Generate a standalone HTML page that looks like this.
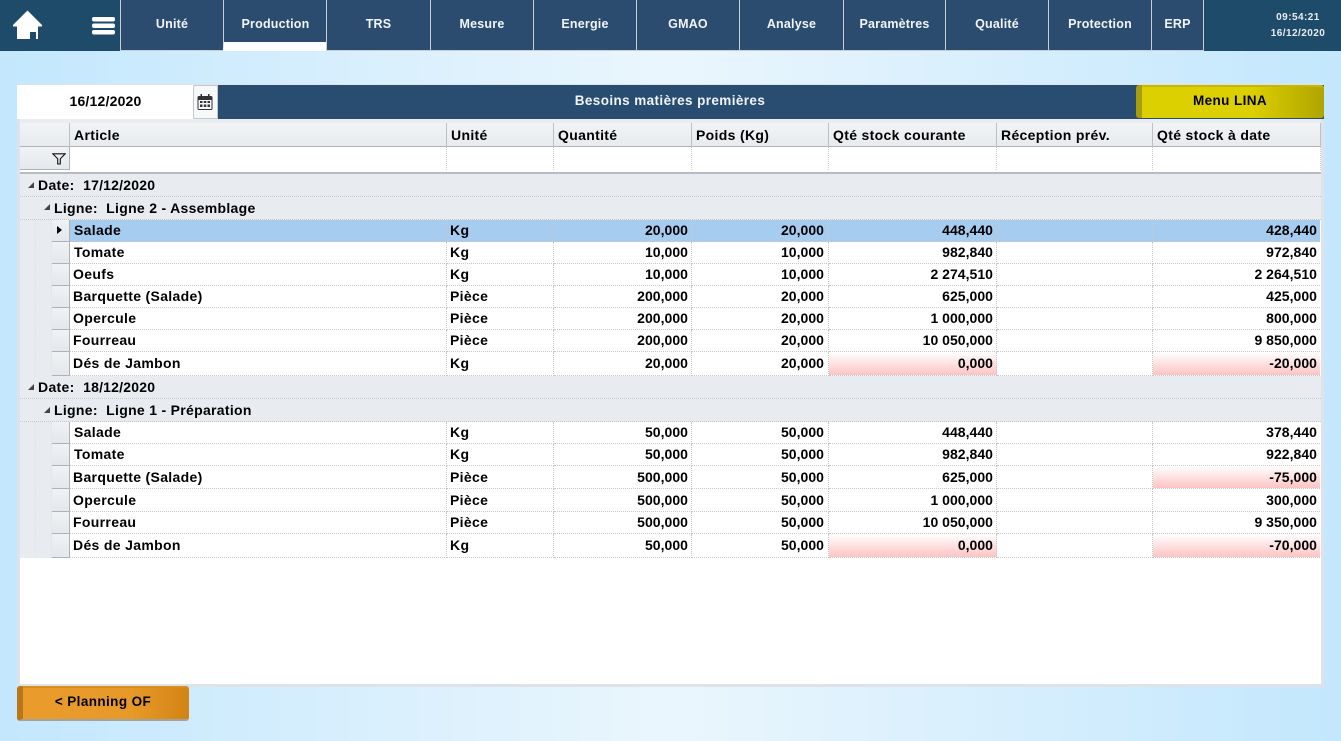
<!DOCTYPE html>
<html><head><meta charset="utf-8">
<style>
html,body{margin:0;padding:0}
body{width:1341px;height:741px;overflow:hidden;position:relative;font-family:"Liberation Sans",sans-serif;font-weight:bold;font-size:14px;letter-spacing:.33px;color:#000;background:linear-gradient(90deg,#c3e7fd 0%,#eaf6fd 50%,#c3e7fd 100%)}
div,span{position:absolute;box-sizing:border-box;white-space:nowrap}
#nav{left:0;top:0;width:1341px;height:51px;background:#1f4b6b}
.t{top:0;height:51px;background:#2b4c6f;color:#f0f4f8;font-size:12.5px;letter-spacing:.2px;text-align:center;line-height:48px;border-left:1px solid #c9ced4;border-bottom:1px solid #c9ced4}
.r{left:20px;width:1301px;height:22px;background:#fff}
.c{top:0;height:100%;border-bottom:1px dotted #c8c8c8;border-right:1px dotted #c8c8c8;display:block}
.i{left:32px;width:17px;top:0;height:100%;background:linear-gradient(#f0f2f4,#e4e7eb);border-bottom:1px solid #aeb2b8}
.b1{left:0;width:16px;top:0;height:100%;background:#e8ebef;border-right:1px dotted #e0e2e6}
.b2{left:16px;width:16px;top:0;height:100%;background:#e8ebef;border-right:1px dotted #e0e2e6}
.a{left:49px;width:378px;padding-left:4px;border-left:1px solid #aeb2b8}
.u{left:427px;width:107px;padding-left:3px}
.q{left:534px;width:138px;text-align:right;padding-right:3px;letter-spacing:.03px}
.p{left:672px;width:137px;text-align:right;padding-right:4px;letter-spacing:.03px}
.s{left:809px;width:168px;text-align:right;padding-right:3px;letter-spacing:.03px}
.e{left:977px;width:156px}
.d{left:1133px;width:167px;text-align:right;padding-right:3px;border-right:0;letter-spacing:.03px}
.n{background:linear-gradient(#fff,#fdc3c3)}
.sel .c{background:#a6ccf0}
.g{left:20px;width:1301px;background:#e8ebef;border-bottom:1px dotted #c8c8c8}
.h{top:123px;height:24px;line-height:24px;padding-left:4px;border-left:1px solid #bcc0c6}
.f{top:147px;height:23px;border-left:1px dotted #ccc}
.tri{width:0;height:0;border-left:6px solid transparent;border-bottom:6px solid #444}
.big{font-size:13.5px;letter-spacing:.4px}
.dt{position:static;letter-spacing:.2px}
</style></head><body>

<div id="nav"></div>
<svg style="position:absolute;left:12px;top:10px" width="32" height="30" viewBox="0 0 32 30"><path fill="#fff" d="M15.500 0.500 L30 15 L30 16.500 L26 16.500 L26 29 L24 29 L24 22 L18 22 L18 29 L5 29 L5 16.500 L1 16.500 L1 15 Z"/></svg>
<svg style="position:absolute;left:91px;top:16px" width="25" height="19" viewBox="0 0 25 19"><rect x="1" y="1" width="23" height="4.500" rx="2" fill="#fff"/><rect x="1" y="7.500" width="23" height="4.500" rx="2" fill="#fff"/><rect x="1" y="14" width="23" height="4.500" rx="2" fill="#fff"/></svg>

<div class="t" style="left:120px;width:103px">Unité</div>
<div class="t" style="left:223px;width:104px;border-bottom:9px solid #fff">Production</div>
<div class="t" style="left:326px;width:104px">TRS</div>
<div class="t" style="left:430px;width:103px">Mesure</div>
<div class="t" style="left:533px;width:103px">Energie</div>
<div class="t" style="left:636px;width:103px">GMAO</div>
<div class="t" style="left:739px;width:104px">Analyse</div>
<div class="t" style="left:843px;width:102px">Paramètres</div>
<div class="t" style="left:945px;width:103px">Qualité</div>
<div class="t" style="left:1048px;width:103px">Protection</div>
<div class="t" style="left:1151px;width:53px;border-right:1px solid #c9ced4">ERP</div>
<div style="left:1258px;width:80px;top:9px;padding-top:1px;text-align:center;color:#e8edf2;font-size:10px;letter-spacing:.45px;line-height:16px">09:54:21<br>16/12/2020</div>

<div style="left:17px;top:84px;width:1307px;height:603px;background:#dfe2e8"></div>
<div style="left:17px;top:85px;width:176px;height:34px;background:#fff;text-align:center;line-height:32px;padding-left:1px;letter-spacing:.2px">16/12/2020</div>
<div style="left:193px;top:85px;width:25px;height:34px;background:#f6f8fa;border:1px solid #c4c8cc;border-radius:2px"></div>
<svg style="position:absolute;left:197px;top:94px" width="16" height="16" viewBox="0 0 16 16"><rect x="0.500" y="2" width="15" height="14" rx="1.500" fill="#333"/><rect x="1.500" y="6" width="13" height="9" fill="#f6f8fa"/><path fill="#333" d="M3 7h2.500v2H3zM6.800 7h2.500v2H6.800zM10.500 7h2.500v2h-2.500zM3 10.500h2.500v2.500H3zM6.800 10.500h2.500v2.500H6.800zM10.500 10.500h2.500v2.500h-2.500z"/><rect x="3.500" y="0" width="1.500" height="4" fill="#333"/><rect x="11" y="0" width="1.500" height="4" fill="#333"/></svg>
<div style="left:218px;top:85px;width:1106px;height:34px;background:#284d70"></div>
<div class="big" style="left:218px;top:85px;width:904px;height:33px;text-align:center;line-height:31px;color:#f0f4f8;">Besoins matières premières</div>
<div class="big" style="left:1136px;top:85px;width:188px;height:33px;background:linear-gradient(90deg,#ddd000 0%,#ddd000 60%,#b0a400 100%);border-radius:3px;border-left:6px solid #a89c10;box-shadow:inset 0 2px 0 #c4b800;text-align:center;line-height:31px;padding-right:6px">Menu LINA</div>

<div style="left:20px;top:119px;width:1301px;height:565px;background:#fff"></div>
<div style="left:20px;top:119px;width:1301px;height:4px;background:#e9ecf0"></div>
<div style="left:20px;top:123px;width:1301px;height:24px;background:linear-gradient(#f1f3f5,#e8ebee);border-bottom:1px solid #b0b4ba"></div>
<div style="left:20px;top:147px;width:50px;height:23px;background:linear-gradient(#f0f2f4,#e6e9ec);border-right:1px solid #b0b4ba;border-bottom:1px solid #b0b4ba"></div>
<svg style="position:absolute;left:52px;top:153px" width="14" height="12" viewBox="0 0 14 12"><path fill="none" stroke="#111" stroke-width="1.100" d="M0.800 0.800H13.200L8.300 5.800V11H5.700V5.800Z"/></svg>

<div class="h" style="left:69px;width:378px">Article</div>
<div class="h" style="left:446px;width:108px">Unité</div>
<div class="h" style="left:553px;width:139px">Quantité</div>
<div class="h" style="left:691px;width:138px">Poids (Kg)</div>
<div class="h" style="left:828px;width:169px">Qté stock courante</div>
<div class="h" style="left:996px;width:157px">Réception prév.</div>
<div class="h" style="left:1152px;width:169px;border-right:1px solid #bcc0c6">Qté stock à date</div>
<div class="f" style="left:446px;width:1px"></div>
<div class="f" style="left:553px;width:1px"></div>
<div class="f" style="left:691px;width:1px"></div>
<div class="f" style="left:828px;width:1px"></div>
<div class="f" style="left:996px;width:1px"></div>
<div class="f" style="left:1152px;width:1px"></div>
<div class="f" style="left:1320px;width:1px"></div>
<div style="left:20px;top:172px;width:1301px;height:2px;background:#b8bcc2"></div>

<!-- Group 1 -->
<div class="g" style="top:174px;height:23px;line-height:23px;padding-left:18px">Date:&nbsp; <span class="dt">17/12/2020</span></div>
<div class="tri" style="left:28px;top:182px"></div>
<div class="g" style="top:197px;height:23px;line-height:22px;padding-left:34px;letter-spacing:.3px">Ligne:&nbsp; Ligne 2 - Assemblage</div>
<div class="tri" style="left:44px;top:204px"></div>

<div class="r sel" style="top:220px;height:22px;line-height:20px"><div class="b1"></div><div class="b2"></div><div class="i"></div><div class="c a">Salade</div><div class="c u">Kg</div><div class="c q">20,000</div><div class="c p">20,000</div><div class="c s">448,440</div><div class="c e"></div><div class="c d">428,440</div></div>
<div style="left:57px;top:226px;width:0;height:0;border-left:5px solid #000;border-top:4px solid transparent;border-bottom:4px solid transparent"></div>
<div class="r" style="top:242px;height:22px;line-height:20px"><div class="b1"></div><div class="b2"></div><div class="i"></div><div class="c a">Tomate</div><div class="c u">Kg</div><div class="c q">10,000</div><div class="c p">10,000</div><div class="c s">982,840</div><div class="c e"></div><div class="c d">972,840</div></div>
<div class="r" style="top:264px;height:22px;line-height:20px"><div class="b1"></div><div class="b2"></div><div class="i"></div><div class="c a" style="padding-left:3px">Oeufs</div><div class="c u">Kg</div><div class="c q">10,000</div><div class="c p">10,000</div><div class="c s">2 274,510</div><div class="c e"></div><div class="c d">2 264,510</div></div>
<div class="r" style="top:286px;height:22px;line-height:20px"><div class="b1"></div><div class="b2"></div><div class="i"></div><div class="c a" style="padding-left:3px">Barquette (Salade)</div><div class="c u">Pièce</div><div class="c q">200,000</div><div class="c p">20,000</div><div class="c s">625,000</div><div class="c e"></div><div class="c d">425,000</div></div>
<div class="r" style="top:308px;height:22px;line-height:20px"><div class="b1"></div><div class="b2"></div><div class="i"></div><div class="c a" style="padding-left:3px">Opercule</div><div class="c u">Pièce</div><div class="c q">200,000</div><div class="c p">20,000</div><div class="c s">1 000,000</div><div class="c e"></div><div class="c d">800,000</div></div>
<div class="r" style="top:330px;height:22px;line-height:20px"><div class="b1"></div><div class="b2"></div><div class="i"></div><div class="c a" style="padding-left:3px">Fourreau</div><div class="c u">Pièce</div><div class="c q">200,000</div><div class="c p">20,000</div><div class="c s">10 050,000</div><div class="c e"></div><div class="c d">9 850,000</div></div>
<div class="r" style="top:352px;height:24px;line-height:22px"><div class="b1"></div><div class="b2"></div><div class="i"></div><div class="c a" style="padding-left:3px">Dés de Jambon</div><div class="c u">Kg</div><div class="c q">20,000</div><div class="c p">20,000</div><div class="c s n">0,000</div><div class="c e"></div><div class="c d n">-20,000</div></div>

<!-- Group 2 -->
<div class="g" style="top:376px;height:23px;line-height:22px;padding-left:18px">Date:&nbsp; <span class="dt">18/12/2020</span></div>
<div class="tri" style="left:28px;top:384px"></div>
<div class="g" style="top:399px;height:23px;line-height:22px;padding-left:34px;letter-spacing:.3px">Ligne:&nbsp; Ligne 1 - Préparation</div>
<div class="tri" style="left:44px;top:407px"></div>

<div class="r" style="top:422px;height:22px;line-height:20px"><div class="b1"></div><div class="b2"></div><div class="i"></div><div class="c a">Salade</div><div class="c u">Kg</div><div class="c q">50,000</div><div class="c p">50,000</div><div class="c s">448,440</div><div class="c e"></div><div class="c d">378,440</div></div>
<div class="r" style="top:444px;height:22px;line-height:20px"><div class="b1"></div><div class="b2"></div><div class="i"></div><div class="c a">Tomate</div><div class="c u">Kg</div><div class="c q">50,000</div><div class="c p">50,000</div><div class="c s">982,840</div><div class="c e"></div><div class="c d">922,840</div></div>
<div class="r" style="top:466px;height:23px;line-height:22px"><div class="b1"></div><div class="b2"></div><div class="i"></div><div class="c a" style="padding-left:3px">Barquette (Salade)</div><div class="c u">Pièce</div><div class="c q">500,000</div><div class="c p">50,000</div><div class="c s">625,000</div><div class="c e"></div><div class="c d n">-75,000</div></div>
<div class="r" style="top:489px;height:23px;line-height:22px"><div class="b1"></div><div class="b2"></div><div class="i"></div><div class="c a" style="padding-left:3px">Opercule</div><div class="c u">Pièce</div><div class="c q">500,000</div><div class="c p">50,000</div><div class="c s">1 000,000</div><div class="c e"></div><div class="c d">300,000</div></div>
<div class="r" style="top:512px;height:22px;line-height:20px"><div class="b1"></div><div class="b2"></div><div class="i"></div><div class="c a" style="padding-left:3px">Fourreau</div><div class="c u">Pièce</div><div class="c q">500,000</div><div class="c p">50,000</div><div class="c s">10 050,000</div><div class="c e"></div><div class="c d">9 350,000</div></div>
<div class="r" style="top:534px;height:24px;line-height:22px"><div class="b1"></div><div class="b2"></div><div class="i"></div><div class="c a" style="padding-left:3px">Dés de Jambon</div><div class="c u">Kg</div><div class="c q">50,000</div><div class="c p">50,000</div><div class="c s n">0,000</div><div class="c e"></div><div class="c d n">-70,000</div></div>

<div class="big" style="left:17px;top:686px;width:172px;height:35px;background:linear-gradient(90deg,#e99c2c 0%,#e89a28 65%,#d28315 100%);border-radius:3px;border-left:6px solid #b9771a;border-bottom:2px solid #a5a29a;box-shadow:inset 0 2px 0 #d98f20;text-align:center;line-height:32px;padding-right:6px">&lt; Planning OF</div>
</body></html>
